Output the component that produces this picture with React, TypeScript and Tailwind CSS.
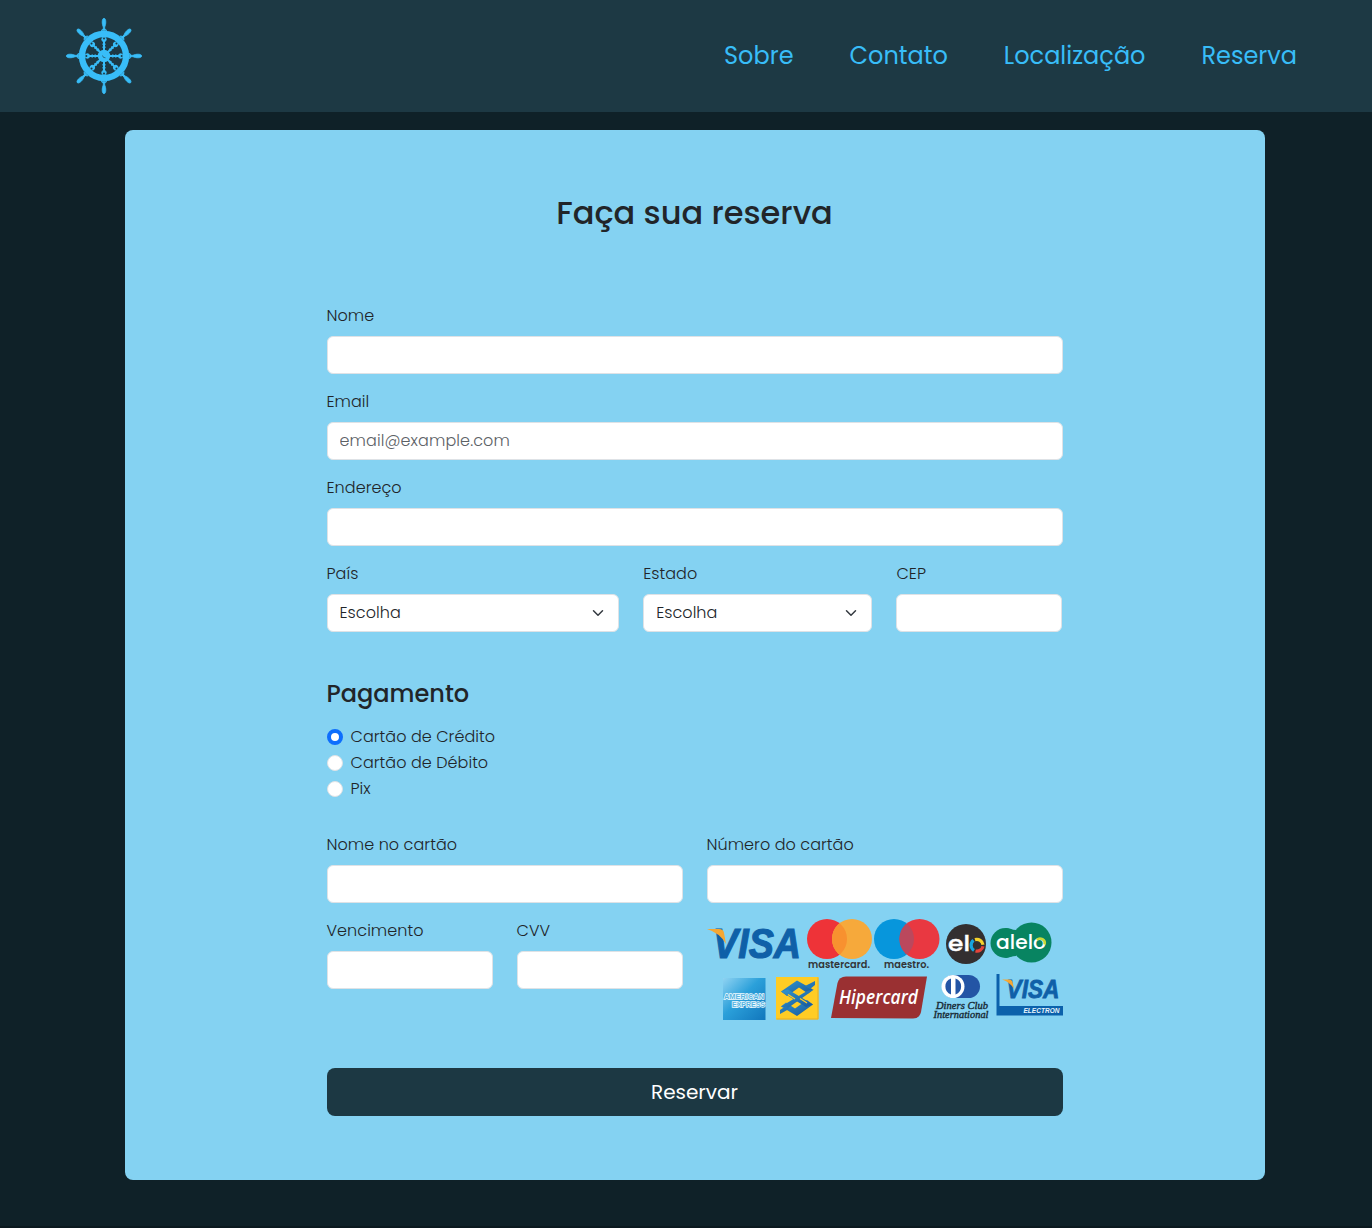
import type { ReactNode } from 'react';

const NAV = ['Sobre', 'Contato', 'Localização', 'Reserva'];

const ANGLES = [0, 45, 90, 135, 180, 225, 270, 315];

function Wheel() {
  return (
    <svg viewBox="-40 -40 80 80" className="size-20" fill="#38bdf8" stroke="#38bdf8">
      <circle r="22" fill="none" strokeWidth="6.4" />
      {ANGLES.map((a) => (
        <g key={a} transform={`rotate(${a})`}>
          <path d="M0 -5V-15" strokeWidth="2" />
          <path d="M0 -8V-14" strokeWidth="3" strokeDasharray="1.5 1.5" />
          <circle cy="-16.6" r="2.2" strokeWidth="1" />
          <circle cy="-17.6" r="1" fill="#1d3944" stroke="none" />
          <path d="M-3 -25.4H3L1 -27H-1Z" strokeWidth=".6" />
          <path d="M-.7 -26L-.7 -29C-2.3 -32 -2.2 -37.7 0 -37.7S2.3 -32 .7 -29V-26Z" strokeWidth=".8" />
        </g>
      ))}
      <circle r="6.2" stroke="none" />
      <path d="M-1.5 -.5Q-1.2 2 1.5 1.8" fill="none" stroke="#1d3944" strokeWidth=".6" />
    </svg>
  );
}

function CardBrands() {
  return (
    <svg viewBox="707 919 356 102" className="h-[102px] w-[356px] overflow-visible" fontFamily="Poppins, sans-serif">
      <defs>
        <linearGradient id="amex" x1="0" y1="0" x2="1" y2="1">
          <stop offset="0" stopColor="#8fd3f2" />
          <stop offset=".45" stopColor="#2ba0da" />
          <stop offset="1" stopColor="#1176bc" />
        </linearGradient>
        <linearGradient id="bb" x1="0" y1="0" x2="1" y2="1">
          <stop offset="0" stopColor="#3297d0" />
          <stop offset="1" stopColor="#17569a" />
        </linearGradient>
        <clipPath id="mcClip"><circle cx="827" cy="939" r="20" /></clipPath>
        <clipPath id="maClip"><circle cx="894" cy="939" r="20" /></clipPath>
      </defs>

      <text x="713" y="958" fontFamily="Liberation Sans" fontSize="42" fontWeight="700" fontStyle="italic" fill="#0f60a8" stroke="#0f60a8" strokeWidth="1.2" textLength="88" lengthAdjust="spacingAndGlyphs">VISA</text>
      <path d="M707 929H719Q723.5 929 724 933L726 944Q720 933 707 929Z" fill="#f5a733" />

      <circle cx="827" cy="939" r="20" fill="#ee3338" />
      <circle cx="852" cy="939" r="20" fill="#f6a93b" />
      <circle cx="852" cy="939" r="20" fill="#f8912f" clipPath="url(#mcClip)" />
      <text x="808" y="968" fontSize="10.5" fontWeight="600" fill="#333537" textLength="62" lengthAdjust="spacingAndGlyphs">mastercard.</text>

      <circle cx="894" cy="939" r="20" fill="#0796dc" />
      <circle cx="919.5" cy="939" r="20" fill="#e93841" />
      <circle cx="919.5" cy="939" r="20" fill="#bb485d" clipPath="url(#maClip)" />
      <text x="884" y="968" fontSize="10.5" fontWeight="600" fill="#333537" textLength="45" lengthAdjust="spacingAndGlyphs">maestro.</text>

      <circle cx="966" cy="944" r="20" fill="#332f30" />
      <text x="948" y="951" fontSize="22" fontWeight="500" fill="#fff" stroke="#fff" strokeWidth=".4" textLength="22" lengthAdjust="spacingAndGlyphs">el</text>
      <g fill="none" strokeWidth="3.2">
        <path d="M974 950.4A6.2 6.2 0 0 1 973.5 940.3" stroke="#18a5df" />
        <path d="M975 939.6A6.2 6.2 0 0 1 983 944.8" stroke="#f5d22c" />
        <path d="M983 946.2A6.2 6.2 0 0 1 975.5 951" stroke="#e6443b" />
      </g>

      <circle cx="1005.5" cy="943" r="15" fill="#088461" />
      <circle cx="1031.5" cy="942.5" r="20" fill="#088461" />
      <path d="M1006 928Q1011 930 1016 930V956Q1011 956 1006 958Z" fill="#088461" />
      <text x="996" y="949" fontSize="19" fontWeight="500" fill="#fff" textLength="50" lengthAdjust="spacingAndGlyphs">alelo</text>
      <path d="M1036.8 939.9A4.7 4.7 0 0 1 1044.6 944.5" fill="none" stroke="#c7d938" strokeWidth="2.6" />

      <rect x="723" y="978" width="42.5" height="42" fill="url(#amex)" />
      <g fill="#58b5e2" stroke="#eefaff" strokeWidth="1.5" fontFamily="Liberation Sans" fontWeight="700" paintOrder="stroke">
        <text x="724" y="999" fontSize="8" textLength="40" lengthAdjust="spacingAndGlyphs">AMERICAN</text>
        <text x="732" y="1007.2" fontSize="8" textLength="33" lengthAdjust="spacingAndGlyphs">EXPRESS</text>
      </g>

      <rect x="776" y="977" width="42.5" height="42.5" fill="#ffcc24" />
      <path d="M776.5 1019H818V977.5" fill="none" stroke="#e6ae25" />
      <g fill="url(#bb)">
        <path d="M797 980.5L781 991.5L787 996L799 987.5L808 993.5L813 989.5Z" />
        <path d="M797 1016L813 1004.5L807 1000L795 1008.5L786 1002.5L781 1006.5Z" />
        <path d="M781 991.5L788 989.5L813 1004.5L806 1007Z" />
        <path d="M814 989.5L807 991L781 1006.5L788 1008Z" />
        <path d="M780 1014V1010L786 1006L789 1009ZM815 981V985L810 989L805 986Z" />
      </g>
      <path d="M788 994.5L795 999M800 998.5L807 1003" stroke="#ffcc24" strokeWidth="1.3" />

      <path d="M831 1018L837.5 983Q839 976.5 846 976.5H927L921 1012Q919.5 1018.5 913 1018.5Z" fill="#9a3032" />
      <text x="839" y="1004" fontFamily="Open Sans" fontSize="19.5" fontWeight="600" fontStyle="italic" fill="#fff" textLength="79" lengthAdjust="spacingAndGlyphs">Hipercard</text>

      <rect x="942" y="975" width="38" height="23" rx="11.5" fill="#2355a5" />
      <circle cx="953" cy="986.5" r="11.5" fill="#fff" />
      <path d="M951 978.5A8.5 8.5 0 0 0 951 994.5ZM955.5 978.5A8.5 8.5 0 0 1 955.5 994.5Z" fill="#2355a5" />
      <g fontFamily="Liberation Serif" fontStyle="italic" fontWeight="400" fill="#182b36" stroke="#182b36" strokeWidth=".4">
        <text x="936" y="1008.5" fontSize="10.5" textLength="52" lengthAdjust="spacingAndGlyphs">Diners Club</text>
        <text x="933.5" y="1018" fontSize="10.5" textLength="55" lengthAdjust="spacingAndGlyphs">International</text>
      </g>

      <path d="M996.5 974H999.5V1006H1063V1015.5H996.5Z" fill="#0b61ab" />
      <text x="1006.5" y="998.3" fontFamily="Liberation Sans" fontSize="25.5" fontWeight="700" fontStyle="italic" fill="#0f60a8" stroke="#0f60a8" strokeWidth=".8" textLength="53" lengthAdjust="spacingAndGlyphs">VISA</text>
      <path d="M1002 979.5H1009Q1012 979.5 1012.5 982L1014 989Q1010 982 1002 979.5Z" fill="#f5a733" />
      <text x="1023.5" y="1013.3" fontFamily="Liberation Sans" fontSize="7.4" fontWeight="700" fontStyle="italic" fill="#e9f5fc" textLength="36" lengthAdjust="spacingAndGlyphs">ELECTRON</text>
    </svg>
  );
}

const CONTROL = 'block h-[38px] w-full rounded-md border border-[#dee2e6] bg-white px-3 pb-px text-base text-[#212529] outline-none';

function Field({ label, children }: { label: string; children?: ReactNode }) {
  return (
    <label className="block">
      <span className="mb-2 block h-6 leading-6">{label}</span>
      {children ?? <input className={CONTROL} />}
    </label>
  );
}

function Select() {
  return (
    <button type="button" className="flex h-[38px] w-full items-center justify-between rounded-md border border-[#dee2e6] bg-white px-3 text-[#212529]">
      Escolha
      <svg viewBox="0 0 16 16" className="h-3 w-4" fill="none" stroke="#343a40" strokeWidth="2" strokeLinecap="round" strokeLinejoin="round">
        <path d="m2 5 6 6 6-6" />
      </svg>
    </button>
  );
}

function Option({ label, checked }: { label: string; checked?: boolean }) {
  return (
    <label className="flex h-[26px] items-center gap-2">
      <input
        type="radio"
        name="pagamento"
        defaultChecked={checked}
        className="size-4 appearance-none rounded-full border border-[#dee2e6] bg-white checked:border-[4.5px] checked:border-[#0d6efd]"
      />
      <span className="leading-6">{label}</span>
    </label>
  );
}

export default function App() {
  return (
    <div className="h-[1228px] w-[1372px] overflow-hidden border-b-2 border-[#0b191f] bg-[#0f2128] font-['Poppins',sans-serif] text-base font-light text-[#212529]">
      <header className="flex h-28 items-center justify-between bg-[#1d3944] pr-[75px] pl-16">
        <Wheel />
        <nav className="flex gap-14 text-2xl font-normal text-[#38bdf8]">
          {NAV.map((label) => (
            <a key={label} className="whitespace-nowrap">{label}</a>
          ))}
        </nav>
      </header>

      <main className="mt-[18px] ml-[125px] h-[1050px] w-[1140px] rounded-lg bg-[#84d2f2] pt-16 pr-[202.5px] pl-[201.5px]">
        <h1 className="text-center text-[32px] leading-[38px] font-medium">Faça sua reserva</h1>
        <form className="mt-[72px] tracking-[0.05px]">
          <div className="flex flex-col gap-4">
            <Field label="Nome" />
            <Field label="Email">
              <input className={`${CONTROL} tracking-[0.1px] placeholder:text-[#5c6166]`} placeholder="email@example.com" />
            </Field>
            <Field label="Endereço" />
            <div className="grid grid-cols-[292.67px_229.33px_166px] gap-6">
              <Field label="País"><Select /></Field>
              <Field label="Estado"><Select /></Field>
              <Field label="CEP" />
            </div>
          </div>

          <h2 className="mt-[47px] text-2xl leading-[29px] font-medium tracking-normal">Pagamento</h2>
          <div className="mt-4">
            <Option label="Cartão de Crédito" checked />
            <Option label="Cartão de Débito" />
            <Option label="Pix" />
          </div>

          <div className="mt-[31px] grid grid-cols-2 gap-x-6 gap-y-4">
            <Field label="Nome no cartão" />
            <Field label="Número do cartão" />
            <div className="grid grid-cols-2 gap-6">
              <Field label="Vencimento" />
              <Field label="CVV" />
            </div>
            <CardBrands />
          </div>

          <button type="button" className="mt-[47px] block h-12 w-full rounded-lg bg-[#1c3843] text-xl font-normal tracking-normal text-white">
            Reservar
          </button>
        </form>
      </main>
    </div>
  );
}
